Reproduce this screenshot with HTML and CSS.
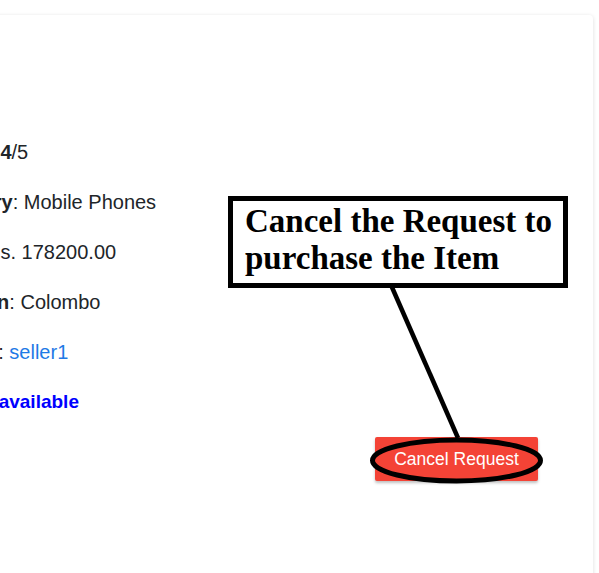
FILE: index.html
```html
<!DOCTYPE html>
<html>
<head>
<meta charset="utf-8">
<link rel="stylesheet" href="styles.css">
</head>
<body>
<div class="page">
  <div class="card">
    <div class="details">
      <p class="row"><b>Rating: 4</b>/5</p>
      <p class="row"><b>Category</b>: Mobile Phones</p>
      <p class="row"><b>Price</b>: Rs. 178200.00</p>
      <p class="row"><b>Location</b>: Colombo</p>
      <p class="row"><b>Sold by</b>: <a class="link" href="#">seller1</a></p>
      <p class="row status">Status: available</p>
    </div>
    <div class="actions">
      <button class="btn-cancel">Cancel Request</button>
    </div>
  </div>
</div>
<div class="callout">Cancel the Request to purchase the Item</div>
<svg class="annot" width="599" height="573" viewBox="0 0 599 573">
  <line x1="391" y1="285" x2="458" y2="438" stroke="#000" stroke-width="4.5"/>
  <ellipse cx="456.5" cy="460.5" rx="84" ry="20.5" fill="none" stroke="#000" stroke-width="5"/>
</svg>
</body>
</html>
```
FILE: styles.css
```css
html, body {
  margin: 0;
  padding: 0;
  background: #ffffff;
  overflow: hidden;
  width: 599px;
  height: 573px;
}
.page {
  padding-top: 15px;
}
.card {
  margin-left: -100px;
  width: 693px;
  height: 620px;
  background: #ffffff;
  border-radius: 4px;
  box-shadow: 0 1px 4px rgba(0, 0, 0, 0.14);
  box-sizing: border-box;
  padding-top: 112px;
  font-family: "Liberation Sans", Arial, sans-serif;
  color: #212529;
  font-size: 20px;
}
.details {
  padding-left: 26px;
}
.row {
  margin: 0;
  height: 50px;
  line-height: 50px;
  white-space: nowrap;
}
.link {
  color: #1f7ae6;
  text-decoration: none;
}
.status {
  color: #0000ff;
  font-weight: bold;
  font-size: 19px;
  padding-left: 3px;
}
.actions {
  display: flex;
  justify-content: flex-end;
  padding-right: 55px;
  margin-top: 10px;
}
.btn-cancel {
  width: 163px;
  height: 44px;
  border: none;
  border-radius: 2px;
  background: #f44336;
  color: #ffffff;
  font-family: "Liberation Sans", Arial, sans-serif;
  font-size: 17.5px;
  box-shadow: 0 2px 3px rgba(0, 0, 0, 0.25);
  padding: 0;
}
.callout {
  position: absolute;
  left: 228px;
  top: 196px;
  width: 340px;
  height: 92px;
  box-sizing: border-box;
  border: 5px solid #000;
  background: #ffffff;
  padding: 2px 6px 0 12px;
  font-family: "Liberation Serif", "Times New Roman", serif;
  font-weight: bold;
  font-size: 33px;
  line-height: 36.5px;
  color: #000;
}
.annot {
  position: absolute;
  left: 0;
  top: 0;
  pointer-events: none;
}
```
